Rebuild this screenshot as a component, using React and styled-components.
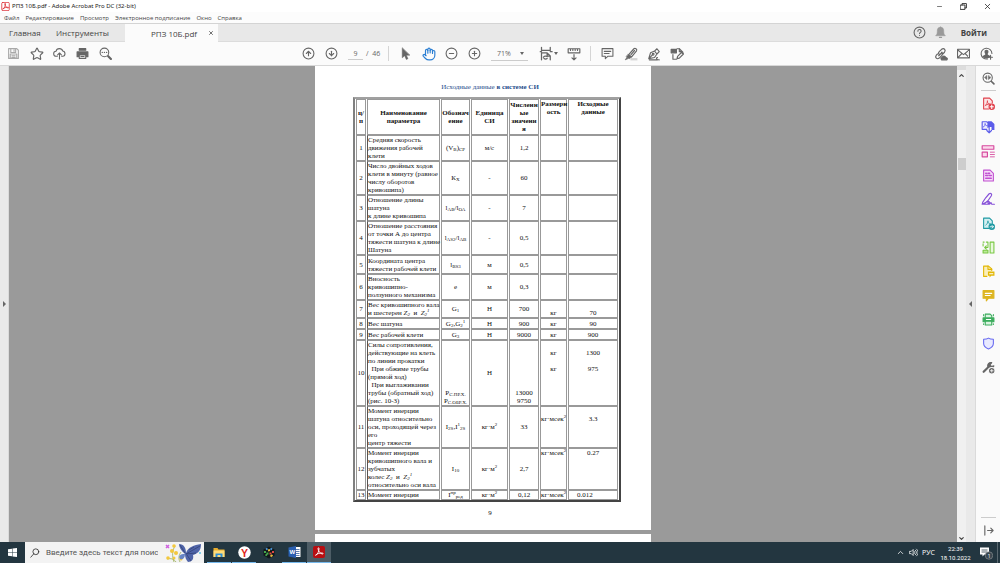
import React from "react";
import styled, { createGlobalStyle, css } from "styled-components";
import {
  Star,
  CircleArrowUp,
  CircleArrowDown,
  CircleMinus,
  CirclePlus,
  Hand,
  Minus,
  X,
  ChevronUp,
  ChevronDown,
} from "lucide-react";

const GlobalStyle = createGlobalStyle`
  * { box-sizing: border-box; }
  body {
    margin: 0;
    font-family: "Open Sans", "Noto Sans", sans-serif;
    font-size: 8px;
    color: #444;
    background: #9a9a9a;
  }
  button, input, select {
    font: inherit;
    color: inherit;
    border: 0;
    padding: 0;
    margin: 0;
    background: none;
  }
  button, a { cursor: pointer; }
`;

/* ---------- icons ---------- */

const Svg = ({ size = 13, children, ...rest }) => (
  <svg
    width={size}
    height={size}
    viewBox="0 0 24 24"
    fill="none"
    stroke="currentColor"
    strokeWidth="2"
    strokeLinecap="round"
    strokeLinejoin="round"
    aria-hidden="true"
    {...rest}
  >
    {children}
  </svg>
);

const swirl =
  "M5 19c4-2 7-8 7-14 0-2-2-2-2 0 0 5 5 11 9 11 2 0 2-2-1-2-4 0-9 1-13 4";

const SaveIcon = () => (
  <Svg color="#a8a8a8">
    <path d="M3 3h15l3 3v15H3zM7 3v7h9V3M13 5v3M6 21v-8h12v8M9 16h6M9 19h6" />
  </Svg>
);
const CloudIcon = () => (
  <Svg>
    <path d="M8 17H6a4.500 4.500 0 0 1-.5-9A6.500 6.500 0 0 1 18 7.500 4.800 4.800 0 0 1 18 17h-2M12 22V11M8.500 14.500 12 11l3.500 3.500" />
  </Svg>
);
const PrintIcon = () => (
  <Svg>
    <path d="M6 3h12v3H6z" fill="currentColor" />
    <path d="M2 9h20v9h-3v-4H5v4H2z" fill="currentColor" />
    <path d="M6 14h12v7H6zM9 17.500h6" />
  </Svg>
);
const FindIcon = () => (
  <Svg>
    <circle cx="10" cy="10" r="8" />
    <path d="m17 17 5 5" strokeWidth="4" />
    <path d="M6 10h.1M10 10h.1M14 10h.1" strokeWidth="2.500" />
  </Svg>
);
const PointerIcon = () => (
  <Svg>
    <path d="M6 2v18l4.500-4 3 7 3-1.500-3-6.500h6z" fill="currentColor" strokeWidth="1" />
  </Svg>
);
const FitIcon = () => (
  <Svg size={15}>
    <path d="M4 2v5h14V2M4 22V11h9l5 5v6M13 11v5h5M2 9h2M18 9h3M7 18a4 4 0 0 1 6-1M13 20a4 4 0 0 1-5 0" />
  </Svg>
);
const RulerIcon = () => (
  <Svg size={14}>
    <path d="M2 3h20v7H2zM6 3v3M10 3v3M14 3v3M18 3v3M12 13v9M8.500 18.500 12 22l3.500-3.500" />
  </Svg>
);
const NoteIcon = () => (
  <Svg>
    <path d="M2 3h20v14h-9l-5 4.500V17H2zM6 8h12M6 12h9" />
  </Svg>
);
const MarkerIcon = () => (
  <Svg size={14}>
    <path d="M11 19h12v4H11z" fill="#d4d4d4" stroke="none" />
    <path d="M8 13 17 3c2-2 6 1 4.500 3.500L13 17z" />
    <path d="m7 13 6 4-4 3-5-3zM5 18l-3 4 5-2" fill="currentColor" strokeWidth="1" />
    <path d="m12 13 6-7" />
  </Svg>
);
const PenIcon = () => (
  <Svg size={14}>
    <path d="m3 20 3-10 7-3 4 5-4 6zM3 20l6-6M13 7l4-4 4 5-4 4M4 22h14M18 18c-3 0-2 4 3 4" />
    <circle cx="10.500" cy="12.500" r="1.500" />
  </Svg>
);
const TagPenIcon = () => (
  <Svg size={14}>
    <path d="M12 3h4l6 6v2M5 13v8h6" />
    <path d="M2 4h9v6H2z" fill="currentColor" />
    <path d="m12 20 1-4 7-7 3 3-7 7zM16 3v5h4" />
  </Svg>
);
const LinkCloudIcon = () => (
  <Svg size={14}>
    <path d="M9 13c-2-2-1-4 0-5l4-4c4-3 8 1 5 5l-3 3M13 9c2 2 2 4 0 6l-4 4c-4 3-8-1-5-5l2-2M8 15l6-6" />
    <path d="M13 22h9c2-2 0-4-2-4-1-3-5-3-6 0-2 0-3 2-1 4z" fill="currentColor" />
  </Svg>
);
const EnvelopeIcon = () => (
  <Svg>
    <path d="M1 4h22v16H1zM1 5l11 9 11-9M2 19l7-7M22 19l-7-7" />
  </Svg>
);
const AccountIcon = () => (
  <Svg>
    <path d="M14 22A10 10 0 1 1 22 12" />
    <path d="M12 5c5 0 4 6 2 8 0 2 5 2 5 5-4 4-10 4-14 0 0-3 5-3 5-5-2-2-3-8 2-8z" fill="currentColor" stroke="none" />
    <path d="M16 19h7M19.500 15.500v7" />
  </Svg>
);
const BellIcon = () => (
  <Svg color="#999">
    <path d="M12 2c5 1 6 3 6 8 0 5 1 6 3 8H3c2-2 3-3 3-8 0-5 1-7 6-8z" fill="currentColor" strokeWidth="1" />
    <path d="M10 21h4" />
  </Svg>
);
const HelpIcon = () => (
  <Svg color="#666">
    <circle cx="12" cy="12" r="10" />
    <path d="M9 9.500a3 3 0 1 1 4.500 2.500c-1.500.8-1.500 1-1.500 2M12 17.500v.1" />
  </Svg>
);
const AcrobatIcon = () => (
  <Svg size={9} color="#d9222a">
    <rect x="2" y="1" width="20" height="22" rx="3" />
    <path d={swirl} />
  </Svg>
);

const ToolFind = () => (
  <Svg color="#666">
    <circle cx="10.500" cy="10.500" r="8.500" />
    <path d="m17 17 5 5" strokeWidth="3" />
    <path d="M9 7v7l-4-3.500zM12 7v7l4-3.500z" fill="currentColor" strokeWidth="1" />
  </Svg>
);
const CreateIcon = () => (
  <Svg color="#e0414c">
    <path d="M12 22H3V2h11l5 5v4" fill="#fbe4e6" />
    <path d="M6 16c3-2 4-6 4-9M10 8c0 4 2 5 5 5M7 15l6-2" strokeWidth="1.500" />
    <circle cx="18" cy="18" r="6" fill="currentColor" stroke="none" />
    <path d="M15 18h6M18 15v6" stroke="#fff" />
  </Svg>
);
const CombineIcon = () => (
  <Svg color="#5b5cea" size={14}>
    <path d="M10 16H2V3h8l2 2v8" fill="#ececff" />
    <path d="M12 2h6l5 5v10h-5v-5h-6z" fill="currentColor" stroke="none" />
    <path d="M4 12c3-1 3-4 3-6 0 3 2 4 4 4" strokeWidth="1.500" />
    <path d="M14 12v10M10 18l4 4 4-4" />
  </Svg>
);
const OrganizeIcon = () => (
  <Svg color="#d64a9e" size={14}>
    <path d="M2 3h20v6H2zM2 14h9v8H2z" fill="#fbd9ec" />
    <path d="M16 14h7M16 18h7M16 22h7" strokeWidth="1.500" />
  </Svg>
);
const RedactIcon = () => (
  <Svg color="#c050d0">
    <path d="M3 2h12l6 6v14H3z" fill="#f7dcfa" />
    <path d="M7 8h1M11 8h3M7 12h4M14 12h3M7 17h10" strokeWidth="3" />
  </Svg>
);
const SignIcon = () => (
  <Svg color="#8650d8" size={14}>
    <path d="M2 21c0-5 4-7 6-11l6-7c3-2 5 1 4 3l-6 9c-3 3-6 5-10 6zM4 21h8c3-1 3-5 1-5s-1 5 1 5c2 0 2-3 3-3s0 3 2 3h4" />
  </Svg>
);
const ExportIcon = () => (
  <Svg color="#1f99a3">
    <path d="M12 21H3V2h11l5 5v5" fill="#d3eff1" />
    <path d="M7 15c3-2 4-5 4-8 0 4 1 5 4 5" strokeWidth="1.500" />
    <circle cx="18" cy="18" r="6" fill="currentColor" stroke="none" />
    <path d="M15 18h6M18.500 15.500 21 18l-2.500 2.500" stroke="#fff" strokeWidth="1.500" />
  </Svg>
);
const CompressIcon = () => (
  <Svg color="#79c843">
    <path d="M15 2h7v20h-7z" fill="#e8f8dc" />
    <path d="M2 9V5M2 2h2M8 2h3v8M11 12H5M8 9l-3 3 3 3" />
    <path d="M2 17h9v5H2z" fill="#bce99a" />
  </Svg>
);
const ShareNoteIcon = () => (
  <Svg color="#e2b705">
    <path d="M9 21H3V2h9l6 5v3" fill="#faeeb8" />
    <path d="M11 2v6h7" />
    <path d="M11 12h12v8h-6l-3 3v-3h-3z" fill="currentColor" stroke="none" />
    <path d="M14 16h6" stroke="#fff" />
  </Svg>
);
const CommentIcon = () => (
  <Svg color="#ddb520">
    <path d="M2 3h20v14H12l-4 5v-5H2z" fill="currentColor" />
    <path d="M6 8h12M6 12h9" stroke="#fff" />
  </Svg>
);
const ScanIcon = () => (
  <Svg color="#3bac5c">
    <path d="M6 8V2h9l3 3v3" fill="#d9f3e0" />
    <path d="M2 9h20v7H2z" fill="currentColor" />
    <path d="M6 15h12v7H6z" fill="#d9f3e0" />
    <path d="M8 12h8" stroke="#fff" />
    <path d="M21 3v2M3 3v2M3 20v1M21 20v1" />
  </Svg>
);
const ProtectIcon = () => (
  <Svg color="#6a6cf0">
    <path d="M12 2c3 2 6 2 9 2v8c0 5-4 8-9 10-5-2-9-5-9-10V4c3 0 6 0 9-2z" fill="#e8e9ff" />
  </Svg>
);
const MoreToolsIcon = () => (
  <Svg color="#666">
    <path d="m3 20 10-10" strokeWidth="4" />
    <path d="M11 11c-2-5 2-9 7-8l-3 4 2 3 5-1c-1 4-5 5-8 4z" fill="currentColor" />
    <circle cx="18" cy="18" r="6" fill="currentColor" stroke="#fafafa" />
    <path d="M15.500 18h5M18 15.500v5" stroke="#fff" strokeWidth="1.500" />
  </Svg>
);
const CollapseIcon = () => (
  <Svg size={11} color="#666">
    <path d="M4 2v20M10 12h12M17 7l5 5-5 5" strokeWidth="2.500" />
  </Svg>
);

/* ---------- window chrome ---------- */

const Window = styled.div`
  display: flex;
  flex-direction: column;
  height: 100vh;
  overflow: hidden;
`;

const TitleBar = styled.header`
  display: flex;
  align-items: center;
  height: 12px;
  padding: 0 1px;
  gap: 2px;
  background: #fff;
  color: #222;
  font-family: "Noto Sans", "Open Sans", sans-serif;
  font-size: 6px;
`;

const WindowButtons = styled.div`
  display: flex;
  margin-left: auto;
`;

const WindowButton = styled.button`
  display: flex;
  align-items: center;
  justify-content: center;
  width: 24px;
  height: 12px;
`;

const MenuBar = styled.nav`
  display: flex;
  align-items: center;
  height: 11px;
  padding: 0 4px;
  gap: 6px;
  background: #fcfcfc;
  font-size: 6px;
  button { white-space: nowrap; }
`;

const Tabs = styled.nav`
  display: flex;
  align-items: stretch;
  height: 19px;
  background: #e8e8e8;
  border-top: 1px solid #d4d4d4;
  border-bottom: 1px solid #dcdcdc;
`;

const Tab = styled.button`
  padding-left: 9px;
  text-align: left;
  width: ${(p) => p.$width};
`;

const ActiveTab = styled.div`
  display: flex;
  align-items: center;
  width: 93px;
  margin-bottom: -1px;
  padding: 0 4px 0 26px;
  justify-content: space-between;
  background: #fbfbfb;
`;

const TabActions = styled.div`
  display: flex;
  align-items: center;
  margin-left: auto;
  gap: 8px;
  padding-right: 13px;
  strong { padding-left: 6px; font-size: 8px; }
`;

const Plain = styled.button`
  display: flex;
  align-items: center;
  justify-content: center;
`;

const Toolbar = styled.div`
  display: grid;
  grid-template-columns: 1fr auto 1fr;
  align-items: center;
  height: 24px;
  padding: 0 2px;
  background: #fbfbfb;
  border-bottom: 1px solid #d8d8d8;
  color: #666;
  font-size: 7px;
`;

const Group = styled.div`
  display: flex;
  align-items: center;
  ${(p) => p.$middle && css`margin-right: 15px;`}
  ${(p) => p.$end && css`justify-content: flex-end;`}
`;

const ToolButton = styled.button`
  display: flex;
  align-items: center;
  justify-content: center;
  width: ${(p) => (p.$wide ? "28px" : "23px")};
  height: 22px;
  color: ${(p) => (p.$active ? "#2c7fd3" : "#666")};
`;

const Divider = styled.span`
  width: 1px;
  height: 15px;
  margin: 0 5px;
  background: #d5d5d5;
`;

const PageField = styled.label`
  display: flex;
  align-items: center;
  gap: 3px;
  width: 40px;
  padding-left: 5px;
  white-space: pre;
  input {
    width: 15px;
    height: 13px;
    text-align: center;
    border-bottom: 1px solid #ccc;
  }
`;

const ZoomSelect = styled.label`
  display: flex;
  align-items: center;
  width: 37px;
  margin: 0 6px 0 5px;
  padding-right: 4px;
  border-bottom: 1px solid #ccc;
  select {
    flex: 1;
    min-width: 0;
    height: 13px;
    padding-left: 6px;
    appearance: none;
    outline: 0;
  }
`;

const Caret = styled.i`
  border: 2px solid transparent;
  border-top: 3px solid #666;
  border-bottom: 0;
`;

/* ---------- work area ---------- */

const Work = styled.main`
  display: flex;
  flex: 1;
  min-height: 0;
`;

const Rail = styled.button`
  display: flex;
  align-items: center;
  justify-content: center;
  width: ${(p) => p.$width};
  background: #e9e9e9;
  border-right: 1px solid #dadada;
`;

const Arrow = styled.i`
  border: 3px solid transparent;
  ${(p) =>
    p.$left
      ? css`border-right-color: #666; border-left: 0;`
      : css`border-left-color: #666; border-right: 0;`}
`;

const Viewer = styled.section`
  flex: 1;
  display: flex;
  flex-direction: column;
  align-items: center;
  gap: 4px;
  overflow: hidden;
  background: #9a9a9a;
`;

const Page = styled.article`
  flex: ${(p) => (p.$next ? "1 0 0" : "none")};
  width: 336px;
  padding: ${(p) => (p.$next ? "0" : "16px 30px 12px 38px")};
  background: #fff;
  color: #111;
  font-family: "Liberation Serif", serif;
  font-size: 7px;
  line-height: 8px;
`;

const Heading = styled.h1`
  margin: 0 0 5px;
  padding-left: 6px;
  font-size: 7px;
  line-height: 10px;
  font-weight: 400;
  text-align: center;
  color: #1f4e8c;
`;

const PageNumber = styled.footer`
  margin-top: 6px;
  padding-left: 6px;
  line-height: 10px;
  text-align: center;
`;

const DataTable = styled.table`
  width: 100%;
  table-layout: fixed;
  border: 2px solid;
  border-color: #a0a0a0 #444 #444 #808080;
  border-spacing: 1px 0;
  sub, sup {
    font-size: 5px;
    line-height: 0;
  }
  sub { vertical-align: -1px; }
  sup { vertical-align: 3px; }
`;

const Col = styled.col`
  width: ${(p) => p.$w};
`;

const Row = styled.tr`
  height: ${(p) => p.$h};
`;

const cell = css`
  padding: 0;
  border: 1px solid #999;
  white-space: pre-line;
`;

const Head = styled.th`
  ${cell}
  vertical-align: ${(p) => (p.$top ? "top" : "middle")};
`;

const Cell = styled.td`
  ${cell}
  text-align: ${(p) => p.$align || "center"};
  vertical-align: ${(p) => p.$v || "middle"};
  ${(p) => p.$indent && css`padding-left: 8px;`}
`;

const NameCell = styled(Cell)`
  text-align: left;
  white-space: pre;
  border-left-color: #555;
`;

const ScrollBar = styled.div`
  display: flex;
  flex-direction: column;
  align-items: center;
  width: 9px;
  padding: 2px 0 0;
  background: #f0f0f0;
  border-top: 4px solid #dcdcdc;
`;

const Thumb = styled.div`
  width: 8px;
  height: 12px;
  margin-top: 79px;
  margin-bottom: auto;
  background: #cdcdcd;
`;

const ToolPanel = styled.aside`
  display: flex;
  flex-direction: column;
  align-items: center;
  width: 24px;
  background: #fafafa;
`;

const PanelButton = styled.button`
  display: flex;
  align-items: center;
  justify-content: center;
  width: 24px;
  height: 24px;
  flex: none;
`;

const PanelLine = styled.hr`
  width: 15px;
  margin: 0;
  border: 0;
  border-top: 1px solid #ccc;
  ${(p) => p.$bottom && css`margin-top: auto;`}
`;

/* ---------- taskbar ---------- */

const TaskBar = styled.footer`
  display: flex;
  height: 21px;
  background: #233640;
  color: #fff;
`;

const Start = styled.button`
  display: flex;
  align-items: center;
  justify-content: center;
  width: 25px;
`;

const Search = styled.label`
  display: flex;
  align-items: center;
  width: 179px;
  padding-left: 5px;
  gap: 6px;
  background: #f3f3f3;
  color: #333;
  input {
    flex: 1;
    min-width: 0;
    font-family: Roboto, sans-serif;
    font-size: 8px;
  }
  input::placeholder { color: #555; opacity: 1; }
`;

const Tasks = styled.div`
  display: flex;
  gap: 1px;
  padding-left: 3px;
`;

const Task = styled.button`
  display: flex;
  align-items: center;
  justify-content: center;
  width: 24px;
  border-bottom: 1px solid ${(p) => (p.$open ? "#76b9ed" : "transparent")};
  background: ${(p) => (p.$active ? "#4d5d66" : "none")};
`;

const Tray = styled.div`
  display: flex;
  align-items: center;
  margin-left: auto;
  font-size: 7px;
`;

const TrayButton = styled.button`
  display: flex;
  align-items: center;
  justify-content: center;
  width: ${(p) => p.$w};
`;

const Clock = styled.time`
  width: 37px;
  line-height: 9px;
  font-family: Roboto, sans-serif;
  font-size: 6px;
  text-align: center;
`;

const ShowDesktop = styled.button`
  width: 3px;
  align-self: stretch;
  border-left: 1px solid #5a6870;
`;

const Butterfly = () => (
  <svg width="40" height="20" viewBox="0 0 40 20" aria-hidden="true">
    <path d="M10 19C8 13 8 8 11 3M16 19c-2-4-1-7 1-10M3 16c4-1 7 0 9 3" stroke="#8fa544" strokeWidth=".7" fill="none" />
    <g fill="#f3c83d">
      <circle cx="10" cy="3" r="1.800" />
      <circle cx="8" cy="8" r="2" />
      <circle cx="12" cy="10" r="2" />
      <circle cx="4" cy="15" r="1.800" />
      <circle cx="10" cy="15" r="1.500" />
      <circle cx="17" cy="16" r="1.500" />
    </g>
    <path d="M2 2l3 3M5 2 2 5" stroke="#cf62df" strokeWidth="1.500" />
    <path d="M21 11C17 8 15 4 15 1c5 0 7 4 7 9C24 4 30 2 37 1c0 6-2 9-8 11 1 4-1 7-5 7-2-2-3-5-3-8z" fill="#4f64a8" />
    <path d="M21 11c-5 0-7 2-5 5 3 1 5-1 5-5z" fill="#6684c4" />
    <path d="M22 11 36 3M22 11l10-1M23 12l4 6M21 10l-5-8M25 7l5-3" stroke="#2f3d70" strokeWidth=".7" />
    <circle cx="36" cy="10" r="1" fill="#5cc4e8" />
  </svg>
);

const FolderIcon = () => (
  <svg width="12" height="11" viewBox="0 0 24 22" aria-hidden="true">
    <path d="M1 2h8l2 3h12v15H1z" fill="#e8ad2d" />
    <path d="M1 7h22v13H1z" fill="#ffdc79" />
    <path d="M5 20v-7h14v7h-4v-4H9v4z" fill="#2d8fd6" />
  </svg>
);
const BrowserIcon = () => (
  <svg width="13" height="13" viewBox="0 0 26 26" aria-hidden="true">
    <circle cx="13" cy="13" r="12.500" fill="#fff" />
    <text x="13" y="21" textAnchor="middle" fontSize="21" fontWeight="700" fontFamily="Liberation Sans, sans-serif" fill="#e1251b">Y</text>
  </svg>
);
const CubeIcon = () => (
  <svg width="12" height="13" viewBox="0 0 24 26" aria-hidden="true">
    <path d="M12 1 23 7v12l-11 6L1 19V7z" fill="#10171b" />
    <g strokeWidth="4">
      <path d="m6 7 3-2M15 5l3 2" stroke="#4d9be0" />
      <path d="M4 10v4M9 13v4M5 17l3 2" stroke="#46a64b" />
      <path d="M20 10v4M15 13v4" stroke="#dc4a43" />
      <path d="m10 9 4-1M19 18l-4 3" stroke="#e2b83f" />
    </g>
  </svg>
);
const WordIcon = () => (
  <svg width="13" height="12" viewBox="0 0 26 24" aria-hidden="true">
    <path d="M12 2h13v20H12z" fill="#fff" />
    <path d="M16 7h7M16 11h7M16 15h7M16 19h7" stroke="#2b579a" strokeWidth="1.500" />
    <path d="M1 3 16 0v24L1 21z" fill="#2b5fb0" />
    <text x="8.500" y="16" textAnchor="middle" fontSize="12" fontWeight="700" fontFamily="Liberation Sans, sans-serif" fill="#fff">W</text>
  </svg>
);
const ReaderIcon = () => (
  <svg width="12" height="12" viewBox="0 0 24 24" aria-hidden="true">
    <rect width="24" height="24" rx="4" fill="#b90e12" />
    <path d={swirl} fill="none" stroke="#fff" strokeWidth="1.800" />
  </svg>
);

/* ---------- data ---------- */

const Z = ({ n, p }) => (
  <i>
    Z<sub>{n}</sub>
    {p && <sup>1</sup>}
  </i>
);

const rows = [
  { n: 1, h: 26, name: "Средняя скорость\nдвижения рабочей\nклети", sym: <>(V<sub>В</sub>)<sub>СР</sub></>, unit: "м/с", val: "1,2" },
  { n: 2, h: 34, name: "Число двойных ходов\nклети в минуту (равное\nчислу оборотов\nкривошипа)", sym: <>К<sub>Х</sub></>, unit: "-", val: "60" },
  { n: 3, h: 26, name: "Отношение длины\nшатуна\nк длине кривошипа", sym: <>l<sub>АВ</sub>/l<sub>ОА</sub></>, unit: "-", val: "7" },
  { n: 4, h: 34, name: "Отношение расстояния\nот точки А до центра\nтяжести шатуна к длине\nШатуна", sym: <>l<sub>АS2</sub>/l<sub>АВ</sub></>, unit: "-", val: "0,5" },
  { n: 5, h: 19, name: "Координата центра\nтяжести рабочей клети", sym: <>l<sub>BS3</sub></>, unit: "м", val: "0,5" },
  { n: 6, h: 26, name: "Вносность\nкривошипно-\nползунного механизма", sym: "е", unit: "м", val: "0,3" },
  { n: 7, h: 18, name: <>Вес кривошипного вала{"\n"}и шестерен <Z n="2" />  и  <Z n="2" p /></>, sym: <>G<sub>1</sub></>, unit: "Н", val: "700", dim: "кг", src: "70", v: "bottom" },
  { n: 8, h: 11, name: "Вес шатуна", sym: <>G<sub>2</sub>,G<sub>2</sub><sup>1</sup></>, unit: "Н", val: "900", dim: "кг", src: "90" },
  { n: 9, h: 11, name: "Вес рабочей клети", sym: <>G<sub>3</sub></>, unit: "Н", val: "9000", dim: "кг", src: "900" },
  { n: 10, h: 66, name: "Силы сопротивления,\nдействующие на клеть\nпо линии прокатки\n  При обжиме трубы\n(прямой ход)\n  При выглаживании\nтрубы (обратный ход)\n(рис. 10-3)", sym: <>Р<sub>С.ПР.Х.</sub>{"\n"}Р<sub>С.ОБР.Х.</sub></>, unit: "Н", val: "13000\n9750", low: "bottom", dim: "\nкг\n\nкг", src: "\n1300\n\n975", v: "top" },
  { n: 11, h: 42, name: "Момент инерции\nшатуна относительно\nоси, проходящей через\nего\nцентр тяжести", sym: <>I<sub>2S</sub>,I<sup>1</sup><sub>2S</sub></>, unit: <>кг·м<sup>2</sup></>, val: "33", dim: <>{"\n"}кг·мсек<sup>2</sup></>, src: "\n3.3", v: "top" },
  { n: 12, h: 42, name: <>Момент инерции{"\n"}кривошипного вала и{"\n"}зубчатых{"\n"}колес <Z n="2" />  и  <Z n="2" p />{"\n"}относительно оси вала</>, sym: <>I<sub>10</sub></>, unit: <>кг·м<sup>2</sup></>, val: "2,7", dim: <>кг·мсек<sup>2</sup></>, src: "0.27", v: "top" },
  { n: 13, h: 10, name: "Момент инерции", sym: <>I<sup>пр</sup><sub>ред</sub></>, unit: <>кг·м<sup>2</sup></>, val: "0,12", dim: <>кг·мсек<sup>2</sup></>, src: "0.012", align: "left" },
];

const columns = [10, 73, 29, 37, 30, 27, 50];

const panelTools = [
  ["Создать PDF", CreateIcon],
  ["Объединить файлы", CombineIcon],
  ["Систематизировать страницы", OrganizeIcon],
  ["Исправления", RedactIcon],
  ["Заполнить и подписать", SignIcon],
  ["Экспорт PDF", ExportIcon],
  ["Сжать PDF", CompressIcon],
  ["Отправить на рецензирование", ShareNoteIcon],
  ["Добавить комментарий", CommentIcon],
  ["Сканирование", ScanIcon],
  ["Защитить", ProtectIcon],
  ["Другие инструменты", MoreToolsIcon],
];

const ParameterTable = () => (
  <DataTable>
    <colgroup>
      {columns.map((w, i) => (
        <Col key={i} $w={`${w}px`} />
      ))}
    </colgroup>
    <thead>
      <Row $h="36px">
        <Head>{"ц/\nп"}</Head>
        <Head>{"Наименование\nпараметра"}</Head>
        <Head>{"Обознач\nение"}</Head>
        <Head>{"Единица\nСИ"}</Head>
        <Head>{"Численн\nые\nзначени\nя"}</Head>
        <Head $top>{"Размерн\nость"}</Head>
        <Head $top>{"Исходные\nданные"}</Head>
      </Row>
    </thead>
    <tbody>
      {rows.map((r) => (
        <Row key={r.n} $h={`${r.h}px`}>
          <Cell>{r.n}</Cell>
          <NameCell>{r.name}</NameCell>
          <Cell $v={r.low}>{r.sym}</Cell>
          <Cell>{r.unit}</Cell>
          <Cell $v={r.low}>{r.val}</Cell>
          <Cell $v={r.v}>{r.dim}</Cell>
          <Cell $v={r.v} $align={r.align} $indent={r.align === "left"}>{r.src}</Cell>
        </Row>
      ))}
    </tbody>
  </DataTable>
);

const App = () => (
  <Window>
    <GlobalStyle />
    <TitleBar>
      <AcrobatIcon />
      <span>РПЗ 10Б.pdf - Adobe Acrobat Pro DC (32-bit)</span>
      <WindowButtons>
        <WindowButton aria-label="Свернуть"><Minus size={7} /></WindowButton>
        <WindowButton aria-label="Развернуть">
          <Svg size={7}><path d="M2 7h15v15H2zM7 7V2h15v15h-5" strokeWidth="3" /></Svg>
        </WindowButton>
        <WindowButton aria-label="Закрыть"><X size={9} /></WindowButton>
      </WindowButtons>
    </TitleBar>
    <MenuBar>
      {["Файл", "Редактирование", "Просмотр", "Электронное подписание", "Окно", "Справка"].map((m) => (
        <button key={m}>{m}</button>
      ))}
    </MenuBar>
    <Tabs>
      <Tab $width="47px">Главная</Tab>
      <Tab $width="78px">Инструменты</Tab>
      <ActiveTab>
        <span>РПЗ 10Б.pdf</span>
        <Plain aria-label="Закрыть вкладку"><X size={6} strokeWidth={3} /></Plain>
      </ActiveTab>
      <TabActions>
        <Plain aria-label="Справка"><HelpIcon /></Plain>
        <Plain aria-label="Уведомления"><BellIcon /></Plain>
        <Plain><strong>Войти</strong></Plain>
      </TabActions>
    </Tabs>
    <Toolbar>
      <Group>
        <ToolButton aria-label="Сохранить"><SaveIcon /></ToolButton>
        <ToolButton aria-label="Избранное"><Star size={14} /></ToolButton>
        <ToolButton aria-label="В облако"><CloudIcon /></ToolButton>
        <ToolButton aria-label="Печать"><PrintIcon /></ToolButton>
        <ToolButton aria-label="Найти"><FindIcon /></ToolButton>
      </Group>
      <Group $middle>
        <ToolButton aria-label="Предыдущая страница"><CircleArrowUp size={13} /></ToolButton>
        <ToolButton aria-label="Следующая страница"><CircleArrowDown size={13} /></ToolButton>
        <PageField>
          <input defaultValue="9" aria-label="Номер страницы" />
          <span>/  46</span>
        </PageField>
        <Divider />
        <ToolButton aria-label="Выделение"><PointerIcon /></ToolButton>
        <ToolButton $active aria-label="Рука"><Hand size={14} /></ToolButton>
        <ToolButton aria-label="Уменьшить"><CircleMinus size={13} /></ToolButton>
        <ToolButton aria-label="Увеличить"><CirclePlus size={13} /></ToolButton>
        <ZoomSelect>
          <select aria-label="Масштаб"><option>71%</option></select>
          <Caret />
        </ZoomSelect>
        <ToolButton $wide aria-label="По ширине"><FitIcon /><Caret /></ToolButton>
        <ToolButton aria-label="Линейка"><RulerIcon /></ToolButton>
        <Divider />
        <ToolButton aria-label="Комментарий"><NoteIcon /></ToolButton>
        <ToolButton aria-label="Маркер"><MarkerIcon /></ToolButton>
        <ToolButton aria-label="Подпись"><PenIcon /></ToolButton>
        <ToolButton aria-label="Штамп"><TagPenIcon /></ToolButton>
      </Group>
      <Group $end>
        <ToolButton aria-label="Ссылка"><LinkCloudIcon /></ToolButton>
        <ToolButton aria-label="Почта"><EnvelopeIcon /></ToolButton>
        <ToolButton aria-label="Учетная запись"><AccountIcon /></ToolButton>
      </Group>
    </Toolbar>
    <Work>
      <Rail $width="9px" aria-label="Панель навигации"><Arrow /></Rail>
      <Viewer>
        <Page>
          <Heading>Исходные данные <b>в системе СИ</b></Heading>
          <ParameterTable />
          <PageNumber>9</PageNumber>
        </Page>
        <Page $next />
      </Viewer>
      <ScrollBar>
        <ChevronUp size={7} strokeWidth={4} />
        <Thumb />
        <ChevronDown size={7} strokeWidth={4} />
      </ScrollBar>
      <Rail $width="10px" aria-label="Скрыть панель"><Arrow $left /></Rail>
      <ToolPanel>
        <PanelButton aria-label="Найти инструмент"><ToolFind /></PanelButton>
        <PanelLine />
        {panelTools.map(([label, Icon]) => (
          <PanelButton key={label} aria-label={label}><Icon /></PanelButton>
        ))}
        <PanelLine $bottom />
        <PanelButton aria-label="Свернуть панель"><CollapseIcon /></PanelButton>
      </ToolPanel>
    </Work>
    <TaskBar>
      <Start aria-label="Пуск">
        <svg width="9" height="9" viewBox="0 0 18 18" fill="#fff" aria-hidden="true">
          <path d="M0 2.500 8 1.400v7H0zM9 1.200 18 0v8.400H9zM0 9.500h8v7l-8-1.100zM9 9.500h9V18l-9-1.200z" />
        </svg>
      </Start>
      <Search>
        <Svg size={10}><circle cx="14" cy="9" r="7" /><path d="m9 14-7 8" /></Svg>
        <input placeholder="Введите здесь текст для поиска" />
        <Butterfly />
      </Search>
      <Tasks>
        <Task $open aria-label="Проводник"><FolderIcon /></Task>
        <Task $open aria-label="Браузер"><BrowserIcon /></Task>
        <Task aria-label="Игра"><CubeIcon /></Task>
        <Task $open aria-label="Word"><WordIcon /></Task>
        <Task $open $active aria-label="Acrobat"><ReaderIcon /></Task>
      </Tasks>
      <Tray>
        <TrayButton $w="13px" aria-label="Скрытые значки"><ChevronUp size={9} /></TrayButton>
        <TrayButton $w="13px" aria-label="Громкость">
          <Svg size={9}><path d="M2 9h4l5-5v16l-5-5H2zM14 9c2 2 2 4 0 6M17 6c4 4 4 8 0 12M20 3c6 6 6 12 0 18" /></Svg>
        </TrayButton>
        <TrayButton $w="17px">РУС</TrayButton>
        <Clock>22:39<br />18.10.2022</Clock>
        <TrayButton $w="23px" aria-label="Уведомления">
          <svg width="14" height="14" viewBox="0 0 28 28" aria-hidden="true">
            <path d="M2 3h18v14H11l-4 4v-4H2z" fill="#fff" />
            <path d="M5 8h12M5 12h12" stroke="#233640" strokeWidth="1.500" />
            <circle cx="20" cy="19" r="7.500" fill="#39474f" stroke="#aaa" />
            <text x="20" y="23" textAnchor="middle" fontSize="11" fill="#fff">1</text>
          </svg>
        </TrayButton>
        <ShowDesktop aria-label="Показать рабочий стол" />
      </Tray>
    </TaskBar>
  </Window>
);

export default App;
